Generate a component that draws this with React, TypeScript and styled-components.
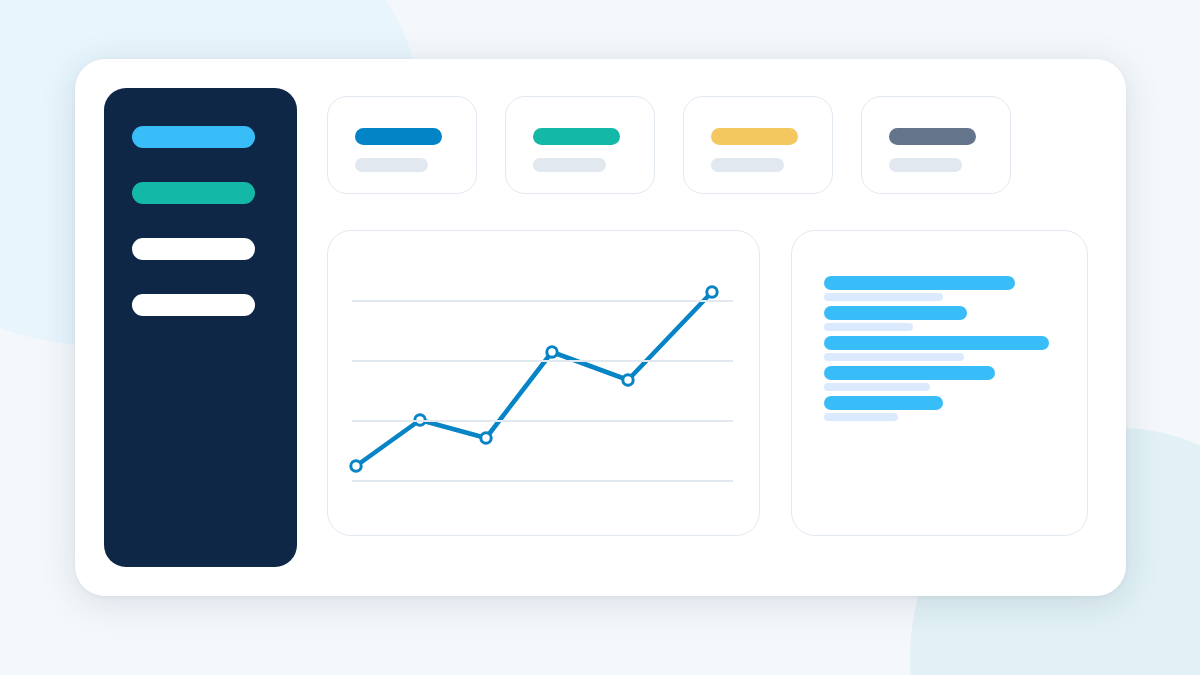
import React from 'react';
import styled, { createGlobalStyle } from 'styled-components';

const GlobalStyle = createGlobalStyle`
  html, body {
    margin: 0;
    padding: 0;
  }
  body {
    font-family: Inter, "Liberation Sans", sans-serif;
    background: #f4f8fb;
  }
`;

const Page = styled.div`
  position: relative;
  width: 1200px;
  height: 675px;
  overflow: hidden;
  background: #f4f8fb;
  display: flex;
  justify-content: center;
  align-items: flex-start;
  padding-top: 59px;
  box-sizing: border-box;
`;

// decorative background shapes, behind the board
const Blob = styled.div<{ $x: number; $y: number; $rx: number; $ry: number; $color: string }>`
  position: absolute;
  left: ${(p) => p.$x - p.$rx}px;
  top: ${(p) => p.$y - p.$ry}px;
  width: ${(p) => p.$rx * 2}px;
  height: ${(p) => p.$ry * 2}px;
  border-radius: 50%;
  background: ${(p) => p.$color};
`;

const Board = styled.div`
  position: relative;
  width: 1051px;
  height: 537px;
  box-sizing: border-box;
  padding: 29px 38px 29px 29px;
  background: #ffffff;
  border-radius: 30px;
  box-shadow: 0 6px 36px rgba(20, 45, 80, 0.13), 0 1px 4px rgba(20, 45, 80, 0.05);
  display: flex;
  gap: 30px;
`;

const Sidebar = styled.nav`
  width: 193px;
  flex-shrink: 0;
  box-sizing: border-box;
  padding: 38px 28px;
  background: #0f2747;
  border-radius: 22px;
  display: flex;
  flex-direction: column;
  gap: 34px;
`;

const NavPill = styled.div<{ $color: string }>`
  width: 123px;
  height: 22px;
  flex-shrink: 0;
  border-radius: 11px;
  background: ${(p) => p.$color};
`;

const Main = styled.div`
  flex: 1;
  padding-top: 8px;
  display: flex;
  flex-direction: column;
  gap: 36px;
`;

const StatRow = styled.div`
  display: flex;
  gap: 28px;
`;

const StatCard = styled.div`
  width: 150px;
  height: 98px;
  box-sizing: border-box;
  padding: 31px 27px 0;
  border: 1px solid #e3e9f1;
  border-radius: 20px;
  display: flex;
  flex-direction: column;
  gap: 13px;
`;

const StatValue = styled.div<{ $color: string }>`
  width: 87px;
  height: 17px;
  flex-shrink: 0;
  border-radius: 8.5px;
  background: ${(p) => p.$color};
`;

const StatLabel = styled.div`
  width: 73px;
  height: 14px;
  flex-shrink: 0;
  border-radius: 7px;
  background: #e2e8f0;
`;

const ContentRow = styled.div`
  display: flex;
  gap: 31px;
`;

const Panel = styled.div<{ $width: number }>`
  width: ${(p) => p.$width}px;
  height: 306px;
  box-sizing: border-box;
  border: 1px solid #e3e9f1;
  border-radius: 24px;
  overflow: hidden;
`;

const ChartSvg = styled.svg`
  display: block;
  width: 100%;
  height: 100%;
`;

const ListPanel = styled(Panel)`
  padding: 45px 32px;
  display: flex;
  flex-direction: column;
  gap: 5px;
`;

const ListItem = styled.div`
  display: flex;
  flex-direction: column;
  gap: 3px;
`;

const BarMain = styled.div`
  height: 14px;
  border-radius: 7px;
  background: #38bdf8;
`;

const BarSub = styled.div`
  height: 8px;
  border-radius: 4px;
  background: #dbeafe;
`;

const navColors = ['#38bdf8', '#14b8a6', '#ffffff', '#ffffff'];
const statColors = ['#0284c7', '#14b8a6', '#f3c85e', '#64748b'];
const points: [number, number][] = [
  [28, 235],
  [92, 189],
  [158, 207],
  [224, 121],
  [300, 149],
  [384, 61],
];
const gridLines = [70, 130, 190, 250];
const bars = [
  [191, 119],
  [143, 89],
  [225, 140],
  [171, 106],
  [119, 74],
];

const LineChart: React.FC = () => (
  <ChartSvg viewBox="0 0 431 304">
    <polyline
      points={points.map((p) => p.join(',')).join(' ')}
      fill="none"
      stroke="#0784c6"
      strokeWidth={4.6}
      strokeLinejoin="round"
    />
    {points.map(([x, y], i) => (
      <circle key={i} cx={x} cy={y} r={5.2} fill="#ffffff" stroke="#0784c6" strokeWidth={3} />
    ))}
    {gridLines.map((y) => (
      <line key={y} x1={24} x2={405} y1={y} y2={y} stroke="#e2e8f0" strokeWidth={2} />
    ))}
  </ChartSvg>
);

const App: React.FC = () => {
  return (
    <>
      <GlobalStyle />
      <Page>
        <Blob $x={120} $y={110} $rx={300} $ry={238} $color="#e8f5fd" />
        <Blob $x={1120} $y={660} $rx={210} $ry={232} $color="#e1f1f5" />
        <Board>
          <Sidebar>
            {navColors.map((c, i) => (
              <NavPill key={i} $color={c} />
            ))}
          </Sidebar>
          <Main>
            <StatRow>
              {statColors.map((c, i) => (
                <StatCard key={i}>
                  <StatValue $color={c} />
                  <StatLabel />
                </StatCard>
              ))}
            </StatRow>
            <ContentRow>
              <Panel $width={433}>
                <LineChart />
              </Panel>
              <ListPanel $width={297}>
                {bars.map(([main, sub], i) => (
                  <ListItem key={i}>
                    <BarMain style={{ width: main }} />
                    <BarSub style={{ width: sub }} />
                  </ListItem>
                ))}
              </ListPanel>
            </ContentRow>
          </Main>
        </Board>
      </Page>
    </>
  );
};

export default App;
